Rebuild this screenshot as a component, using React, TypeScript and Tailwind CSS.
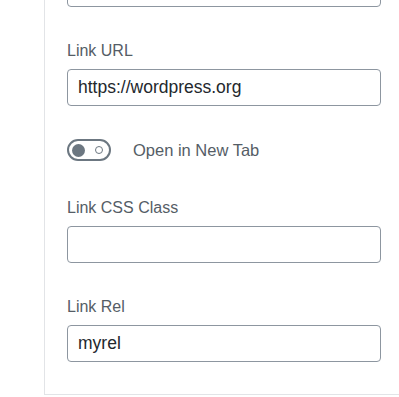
import React from 'react';

function Field({ label, value, className = '' }: { label: string; value?: string; className?: string }) {
  return (
    <div className={className}>
      <div className="text-[16px] leading-5 text-[#555d66]">{label}</div>
      <div className="mt-[8px] flex h-[37px] items-center rounded-[4px] border border-[#8d96a0] px-[10px] text-[17.5px] text-[#23282d]">
        {value}
      </div>
    </div>
  );
}

export default function App() {
  return (
    <div className="h-[397px] w-[399px] overflow-hidden bg-white font-['Liberation_Sans',Arial,sans-serif]">
      <div className="ml-[44px] h-[395px] overflow-hidden border-b border-l border-[#e2e4e7] pl-[22px]">
        <div className="-mt-[30px] w-[314px]">
          <div className="h-[37px] rounded-[4px] border border-[#8d96a0]" />

          <Field label="Link URL" value="https://wordpress.org" className="mt-[34px]" />

          <div className="mt-[32px] flex items-center gap-[22px]">
            <div className="flex h-[22px] w-[44px] items-center rounded-full border-[2.5px] border-[#6c7781]">
              <span className="ml-[3px] h-[13px] w-[13px] rounded-full bg-[#6c7781]" />
              <span className="ml-auto mr-[6px] h-[8px] w-[8px] rounded-full border-[1.5px] border-[#6c7781]" />
            </div>
            <span className="text-[16.5px] text-[#555d66]">Open in New Tab</span>
          </div>

          <Field label="Link CSS Class" className="mt-[35px]" />

          <Field label="Link Rel" value="myrel" className="mt-[34px]" />
        </div>
      </div>
    </div>
  );
}
